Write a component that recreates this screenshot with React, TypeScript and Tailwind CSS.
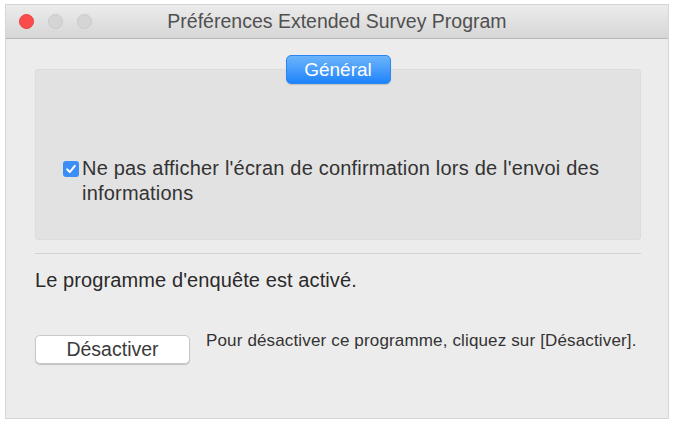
import React, { useState } from 'react';

const FONT = '"Liberation Sans", Arial, sans-serif';

export default function App() {
  const [hideConfirm, setHideConfirm] = useState(true);

  return (
    <div className="w-[674px] h-[423px] bg-white pt-[4px] px-[5px] pb-[4px]" style={{ fontFamily: FONT }}>
      <div className="h-full flex flex-col border border-[#d6d6d6] bg-[#ececec]">
        {/* Title bar */}
        <div className="relative h-[34px] shrink-0 flex items-center justify-center bg-gradient-to-b from-[#ececec] to-[#d6d6d6] border-b border-[#b8b8b8]">
          <div className="absolute left-[13px] top-[9px] flex gap-[14px]">
            <span className="w-[15px] h-[15px] rounded-full bg-[#fb4b4b] border border-[#e6413f]" />
            <span className="w-[15px] h-[15px] rounded-full bg-[#d5d5d5] border border-[#cacaca]" />
            <span className="w-[15px] h-[15px] rounded-full bg-[#d5d5d5] border border-[#cacaca]" />
          </div>
          <span className="text-[19.5px] text-[#505050] leading-none">Préférences Extended Survey Program</span>
        </div>

        {/* Content */}
        <div className="flex-1 flex flex-col pl-[29px] pr-[27px] pt-[16px]">
          <div className="relative z-10 flex justify-center">
            <button className="w-[105px] h-[29px] rounded-[5px] bg-gradient-to-b from-[#6bb4fb] to-[#1c83fb] border border-[#2a86f0] text-white text-[19px] leading-none shadow-[0_1px_1px_rgba(0,0,0,0.15)]">
              Général
            </button>
          </div>
          <div className="-mt-[15px] h-[171px] bg-[#e2e2e2] border border-[#dcdcdc] rounded-[3px] pl-[27px] pr-[20px] pt-[86px]">
            <label className="flex items-start gap-[3px] cursor-default">
              <span
                onClick={() => setHideConfirm(!hideConfirm)}
                className={`mt-[5px] w-[16px] h-[16px] shrink-0 rounded-[3px] flex items-center justify-center ${hideConfirm ? 'bg-[#3b8ef5]' : 'bg-white border border-[#b0b0b0]'}`}
              >
                {hideConfirm && (
                  <svg width="12" height="12" viewBox="0 0 11 11">
                    <path d="M2 5.8 L4.4 8.3 L9 2.6" fill="none" stroke="white" strokeWidth="1.8" strokeLinecap="round" strokeLinejoin="round" />
                  </svg>
                )}
              </span>
              <span className="text-[20px] leading-[25px] tracking-[0.2px] text-[#333]">
                Ne pas afficher l'écran de confirmation lors de l'envoi des informations
              </span>
            </label>
          </div>

          {/* Separator */}
          <div className="mt-[13px] h-px bg-[#d3d3d3]" />

          <p className="mt-[14px] text-[20px] leading-[25px] tracking-[0.1px] text-[#2a2a2a]">Le programme d'enquête est activé.</p>

          <div className="mt-[42px] flex items-start gap-[16px]">
            <button className="w-[155px] h-[29px] rounded-[5px] bg-white border border-[#c8c8c8] shadow-[0_1px_1px_rgba(0,0,0,0.18)] text-[19.5px] leading-none text-[#3a3a3a]">
              Désactiver
            </button>
            <p className="-mt-[4px] text-[17px] leading-[20px] tracking-[0.15px] text-[#333]">
              Pour désactiver ce programme, cliquez sur [Désactiver].
            </p>
          </div>
        </div>
      </div>
    </div>
  );
}
